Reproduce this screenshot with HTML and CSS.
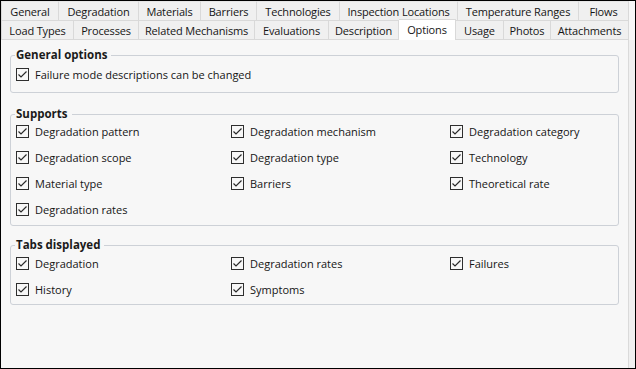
FILE: index.html
```html
<!DOCTYPE html>
<html>
<head>
<meta charset="utf-8">
<link rel="stylesheet" href="styles.css">
</head>
<body>
<div class="window">
  <div class="tabs">
    <div class="tab-row row1">
      <div class="tab">General</div>
      <div class="tab">Degradation</div>
      <div class="tab">Materials</div>
      <div class="tab">Barriers</div>
      <div class="tab">Technologies</div>
      <div class="tab">Inspection Locations</div>
      <div class="tab">Temperature Ranges</div>
      <div class="tab">Flows</div>
    </div>
    <div class="tab-row row2">
      <div class="tab">Load Types</div>
      <div class="tab">Processes</div>
      <div class="tab">Related Mechanisms</div>
      <div class="tab">Evaluations</div>
      <div class="tab">Description</div>
      <div class="tab active">Options</div>
      <div class="tab">Usage</div>
      <div class="tab">Photos</div>
      <div class="tab">Attachments</div>
    </div>
  </div>
  <div class="body">
    <div class="panel">
      <fieldset class="group g1">
        <legend>General options</legend>
        <div class="grid">
          <label class="check"><span class="box"><svg viewBox="0 0 11 11" width="11" height="11"><polyline points="1.5,5.5 4,8 9.5,2.5" fill="none" stroke="#2a2a2a" stroke-width="1.2"/></svg></span>Failure mode descriptions can be changed</label>
        </div>
      </fieldset>
      <fieldset class="group g2">
        <legend>Supports</legend>
        <div class="grid cols">
          <label class="check"><span class="box"><svg viewBox="0 0 11 11" width="11" height="11"><polyline points="1.5,5.5 4,8 9.5,2.5" fill="none" stroke="#2a2a2a" stroke-width="1.2"/></svg></span>Degradation pattern</label>
          <label class="check"><span class="box"><svg viewBox="0 0 11 11" width="11" height="11"><polyline points="1.5,5.5 4,8 9.5,2.5" fill="none" stroke="#2a2a2a" stroke-width="1.2"/></svg></span>Degradation mechanism</label>
          <label class="check"><span class="box"><svg viewBox="0 0 11 11" width="11" height="11"><polyline points="1.5,5.5 4,8 9.5,2.5" fill="none" stroke="#2a2a2a" stroke-width="1.2"/></svg></span>Degradation category</label>
          <label class="check"><span class="box"><svg viewBox="0 0 11 11" width="11" height="11"><polyline points="1.5,5.5 4,8 9.5,2.5" fill="none" stroke="#2a2a2a" stroke-width="1.2"/></svg></span>Degradation scope</label>
          <label class="check"><span class="box"><svg viewBox="0 0 11 11" width="11" height="11"><polyline points="1.5,5.5 4,8 9.5,2.5" fill="none" stroke="#2a2a2a" stroke-width="1.2"/></svg></span>Degradation type</label>
          <label class="check"><span class="box"><svg viewBox="0 0 11 11" width="11" height="11"><polyline points="1.5,5.5 4,8 9.5,2.5" fill="none" stroke="#2a2a2a" stroke-width="1.2"/></svg></span>Technology</label>
          <label class="check"><span class="box"><svg viewBox="0 0 11 11" width="11" height="11"><polyline points="1.5,5.5 4,8 9.5,2.5" fill="none" stroke="#2a2a2a" stroke-width="1.2"/></svg></span>Material type</label>
          <label class="check"><span class="box"><svg viewBox="0 0 11 11" width="11" height="11"><polyline points="1.5,5.5 4,8 9.5,2.5" fill="none" stroke="#2a2a2a" stroke-width="1.2"/></svg></span>Barriers</label>
          <label class="check"><span class="box"><svg viewBox="0 0 11 11" width="11" height="11"><polyline points="1.5,5.5 4,8 9.5,2.5" fill="none" stroke="#2a2a2a" stroke-width="1.2"/></svg></span>Theoretical rate</label>
          <label class="check"><span class="box"><svg viewBox="0 0 11 11" width="11" height="11"><polyline points="1.5,5.5 4,8 9.5,2.5" fill="none" stroke="#2a2a2a" stroke-width="1.2"/></svg></span>Degradation rates</label>
        </div>
      </fieldset>
      <fieldset class="group g3">
        <legend>Tabs displayed</legend>
        <div class="grid cols">
          <label class="check"><span class="box"><svg viewBox="0 0 11 11" width="11" height="11"><polyline points="1.5,5.5 4,8 9.5,2.5" fill="none" stroke="#2a2a2a" stroke-width="1.2"/></svg></span>Degradation</label>
          <label class="check"><span class="box"><svg viewBox="0 0 11 11" width="11" height="11"><polyline points="1.5,5.5 4,8 9.5,2.5" fill="none" stroke="#2a2a2a" stroke-width="1.2"/></svg></span>Degradation rates</label>
          <label class="check"><span class="box"><svg viewBox="0 0 11 11" width="11" height="11"><polyline points="1.5,5.5 4,8 9.5,2.5" fill="none" stroke="#2a2a2a" stroke-width="1.2"/></svg></span>Failures</label>
          <label class="check"><span class="box"><svg viewBox="0 0 11 11" width="11" height="11"><polyline points="1.5,5.5 4,8 9.5,2.5" fill="none" stroke="#2a2a2a" stroke-width="1.2"/></svg></span>History</label>
          <label class="check"><span class="box"><svg viewBox="0 0 11 11" width="11" height="11"><polyline points="1.5,5.5 4,8 9.5,2.5" fill="none" stroke="#2a2a2a" stroke-width="1.2"/></svg></span>Symptoms</label>
        </div>
      </fieldset>
    </div>
    <div class="strip"></div>
  </div>
</div>
</body>
</html>
```

FILE: styles.css
```css
* { box-sizing: border-box; }
html, body { margin: 0; padding: 0; background: #ffffff; }
body {
  font-family: "Open Sans", "Noto Sans", sans-serif;
  font-size: 11px;
  color: #151515;
}
.window {
  width: 636px;
  height: 369px;
  border: 1px solid #000;
  background: #f0f0f0;
  display: flex;
  flex-direction: column;
}
.tabs {
  display: flex;
  flex-direction: column;
  background: #f7f7f7;
}
.tab-row { display: flex; }
.row1 { height: 20px; }
.row2 { height: 19px; }
.tab {
  background: #f0f0f0;
  border-right: 1px solid #d9d9d9;
  border-bottom: 1px solid #d9d9d9;
  display: flex;
  align-items: center;
  justify-content: center;
  white-space: nowrap;
  padding-top: 1px;
  letter-spacing: -0.15px;
}
.row1 .tab { border-top: 1px solid #e6e6e6; }
.tab:first-child { border-left: 1px solid #d9d9d9; }
.row1 .tab:nth-child(1) { width: 58px; }
.row1 .tab:nth-child(2) { width: 80px; }
.row1 .tab:nth-child(3) { width: 62px; }
.row1 .tab:nth-child(4) { width: 56px; }
.row1 .tab:nth-child(5) { width: 83px; }
.row1 .tab:nth-child(6) { width: 118px; }
.row1 .tab:nth-child(7) { width: 121px; }
.row1 .tab:nth-child(8) { width: 50px; }
.row2 .tab:nth-child(1) { width: 73px; }
.row2 .tab:nth-child(2) { width: 65px; }
.row2 .tab:nth-child(3) { width: 116px; }
.row2 .tab:nth-child(4) { width: 74px; }
.row2 .tab:nth-child(5) { width: 70px; }
.row2 .tab:nth-child(6) { width: 57px; }
.row2 .tab:nth-child(7) { width: 48px; }
.row2 .tab:nth-child(8) { width: 47px; }
.row2 .tab:nth-child(9) { width: 78px; }
.tab.active {
  background: #ffffff;
  height: 21px;
  margin-top: -2px;
  border-bottom: none;
  border-top: 1px solid #d9d9d9;
  position: relative;
  z-index: 1;
  align-items: flex-start;
  padding-top: 2px;
}
.body {
  flex: 1;
  display: flex;
}
.panel {
  width: 628px;
  background: #f7f7f7;
  border-right: 1px solid #dadada;
  padding-top: 8px;
}
.strip { flex: 1; background: #f0f0f0; }
.group {
  margin: 0 9px;
  border: 1px solid #cdd1d7;
  border-radius: 3px;
  padding: 1px 4px 6px 5px;
  min-width: 0;
}
.group legend {
  font-weight: bold;
  font-size: 11.5px;
  line-height: 14px;
  padding: 0 4px 0 1px;
  margin-left: -1px;
  color: #1a1a1a;
}
.g1 { padding-top: 2px; padding-bottom: 8px; }
.g2 { margin-top: 14px; padding-top: 0; padding-bottom: 6px; }
.g3 { margin-top: 12px; padding-top: 1px; padding-bottom: 5px; }
.grid {
  display: grid;
  row-gap: 6px;
}
.grid.cols { grid-template-columns: 215px 219px 1fr; }
.check {
  display: flex;
  align-items: center;
  height: 20px;
  white-space: nowrap;
}
.box {
  width: 13px;
  height: 13px;
  border: 1px solid #2e2e2e;
  margin-right: 6px;
  display: flex;
  align-items: center;
  justify-content: center;
  flex: none;
}
.box svg { display: block; }
```
